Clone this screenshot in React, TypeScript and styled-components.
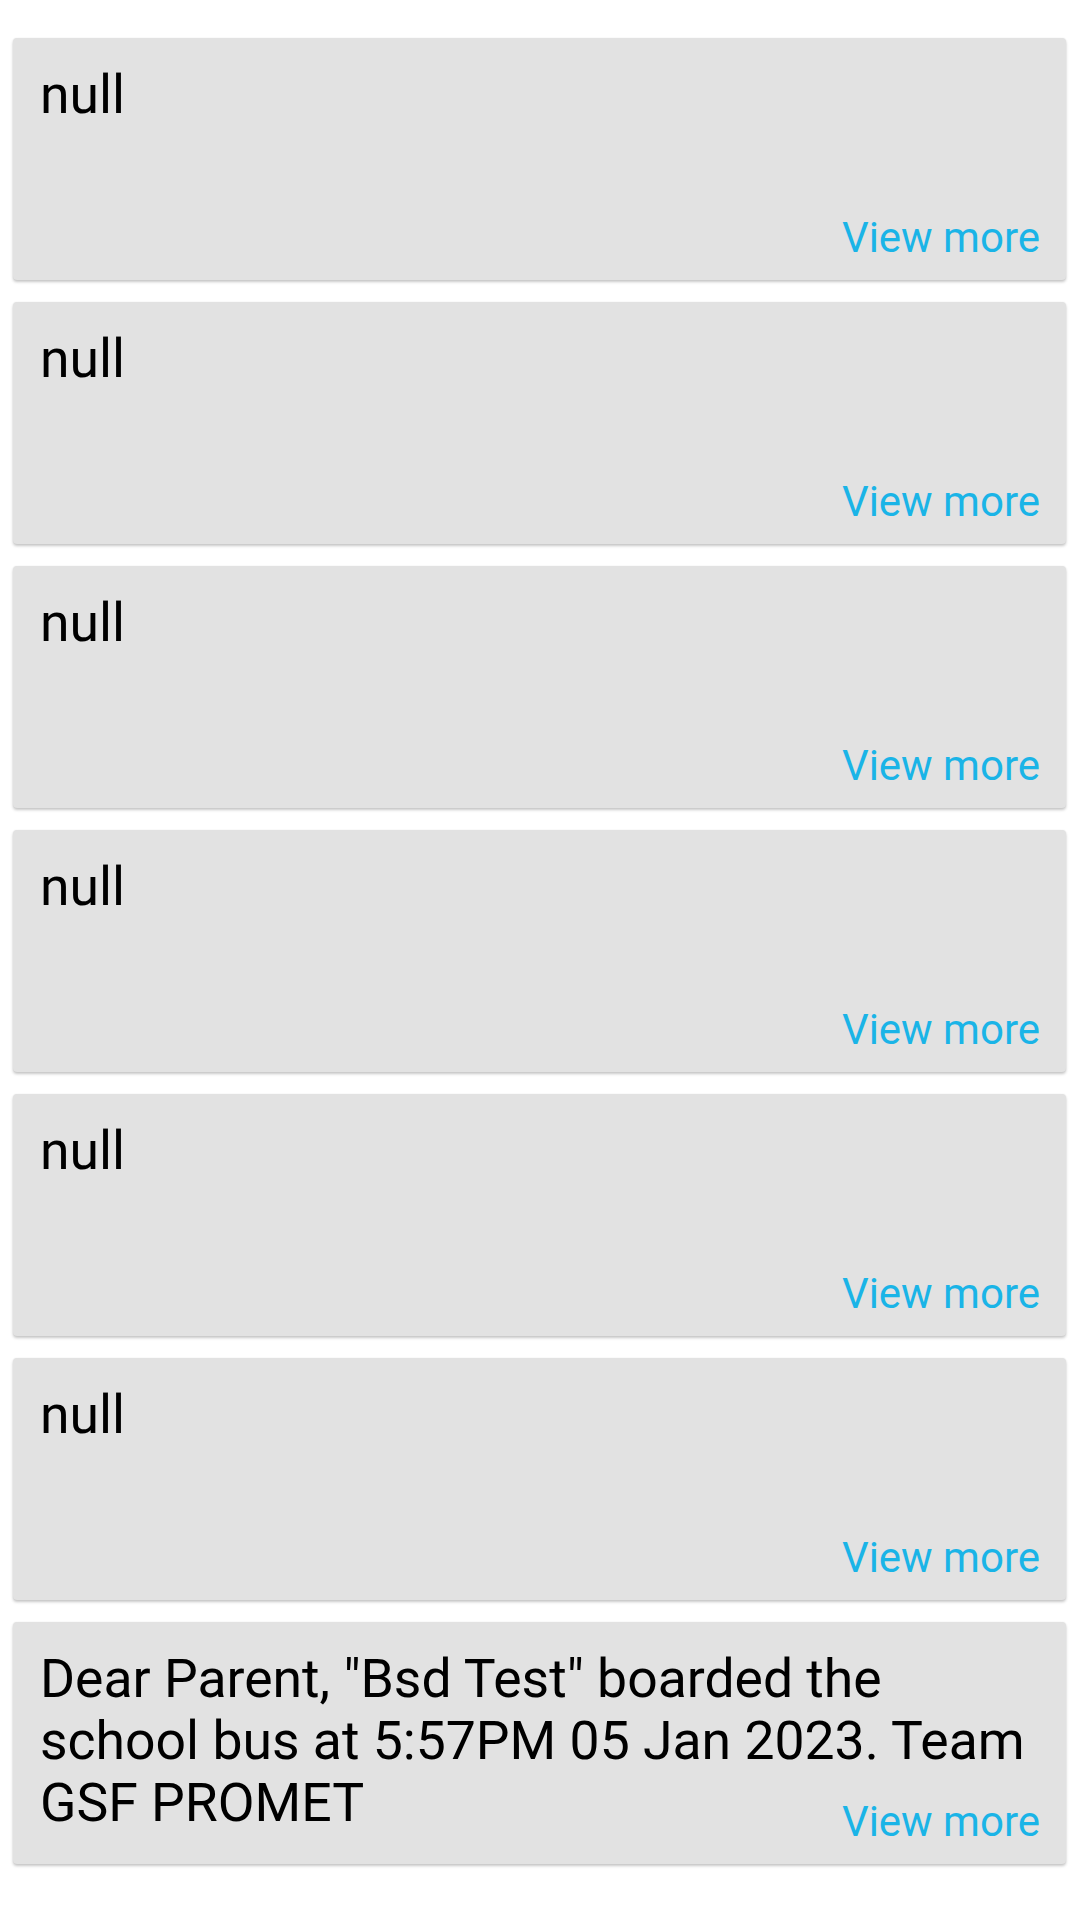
import React from 'react';
import styled, {createGlobalStyle} from 'styled-components';

const GlobalStyle = createGlobalStyle`
  html, body {
    margin: 0;
    padding: 0;
    background: #ffffff;
  }
  body {
    font-family: Roboto, "Noto Sans", "Liberation Sans", sans-serif;
  }
`;

const List = styled.ul`
  list-style: none;
  margin: 0;
  padding: 38px 14px 40px 13px;
  display: flex;
  flex-direction: column;
  gap: 22px;
`;

const Card = styled.li`
  box-sizing: border-box;
  height: 242px;
  padding: 26px 26px 18px 27px;
  background: #e2e2e2;
  border-radius: 4px;
  box-shadow: 0 2px 3px rgba(0, 0, 0, 0.22), 0 0 2px rgba(0, 0, 0, 0.06);
  display: grid;
  grid-template: 1fr / 1fr;
`;

const Message = styled.p`
  grid-area: 1 / 1;
  align-self: start;
  margin: 0;
  font-size: 53.5px;
  line-height: 62px;
  color: #000000;
  overflow: hidden;
`;

const ViewMore = styled.a`
  grid-area: 1 / 1;
  align-self: end;
  justify-self: end;
  font-size: 42px;
  line-height: 49px;
  color: #1ab4e7;
  text-decoration: none;
  cursor: pointer;
`;

const notices: string[] = [
    'null',
    'null',
    'null',
    'null',
    'null',
    'null',
    'Dear Parent, "Bsd Test" boarded the school bus at 5:57PM 05 Jan 2023. Team GSF PROMET',
];

const App: React.FC = () => {
    return (
        <>
            <GlobalStyle/>
            <List>
                {notices.map((text, index) => (
                    <Card key={index}>
                        <Message>{text}</Message>
                        <ViewMore>View more</ViewMore>
                    </Card>
                ))}
            </List>
        </>
    );
};

export default App;
